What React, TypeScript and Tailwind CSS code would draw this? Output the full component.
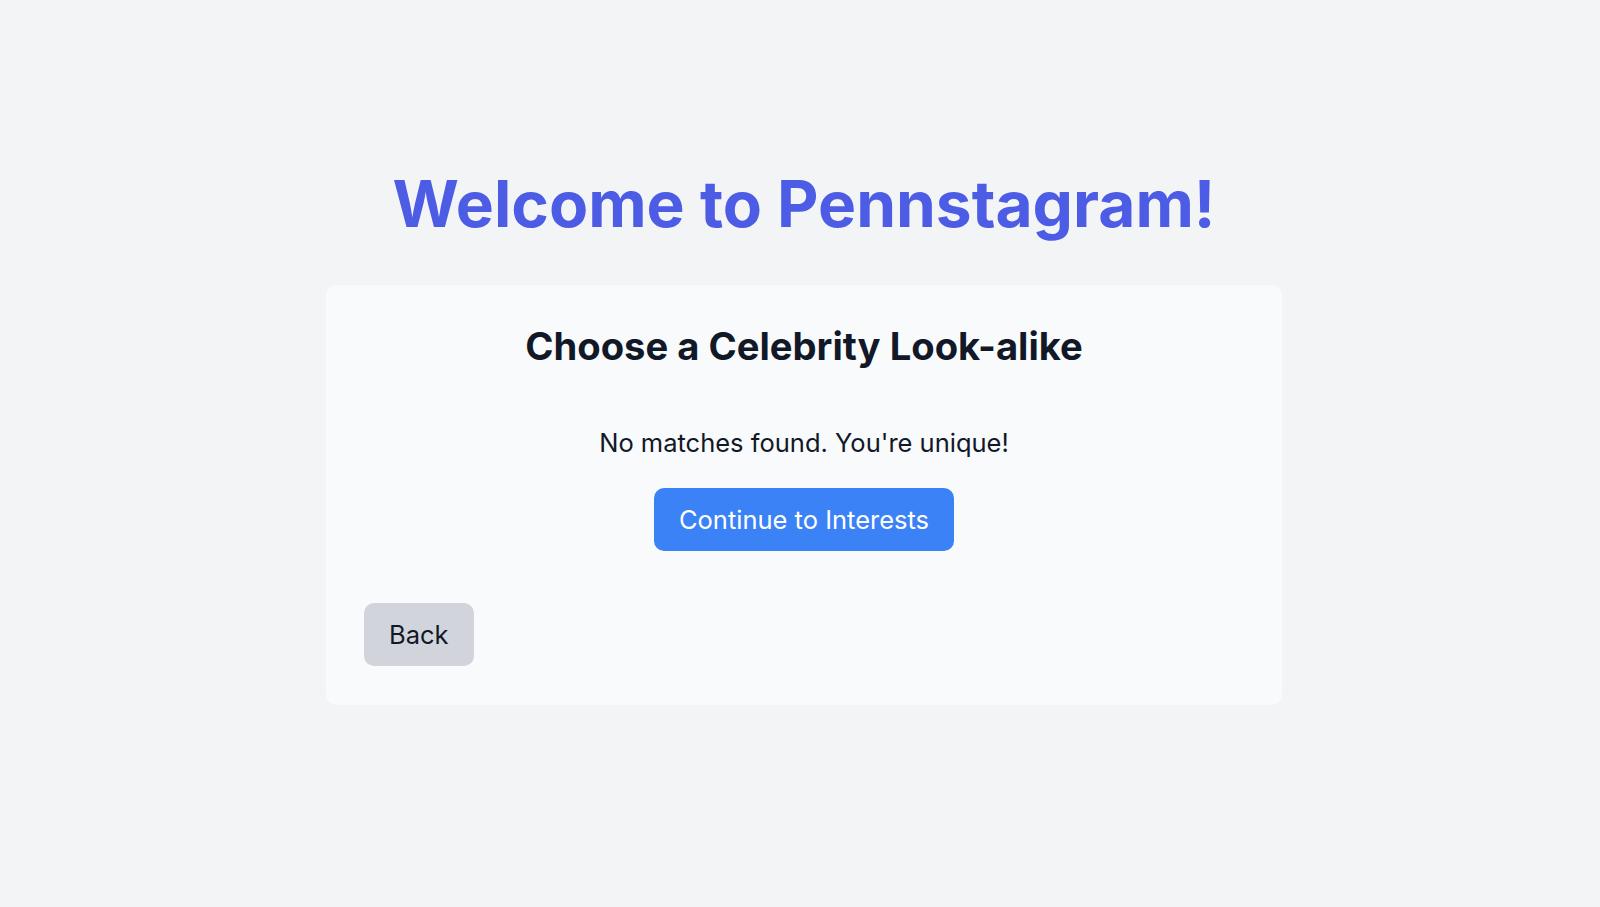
import React from 'react';

function CelebrityStep() {
  return (
    <div className="w-[956px] mt-[49px] rounded-[10px] bg-[#f9fafb] px-[38px] pt-[38px] pb-[39px]">
      <h2 className="text-center text-[38.2px] leading-[47px] font-bold text-[#111827]">
        Choose a Celebrity Look-alike
      </h2>

      <p className="mt-[55px] text-center text-[25.5px] leading-[35px] text-[#111827]">
        No matches found. You're unique!
      </p>

      <div className="mt-[28px] flex justify-center">
        <button className="rounded-[10px] bg-[#3b82f6] px-[25px] py-[14px] text-[25.5px] leading-[35px] text-white">
          Continue to Interests
        </button>
      </div>

      {/* Navigation */}
      <div className="mt-[52px] flex">
        <button className="rounded-[10px] bg-[#d1d5db] px-[25px] py-[14px] text-[25.5px] leading-[35px] text-[#111827]">
          Back
        </button>
      </div>
    </div>
  );
}

export default function App() {
  return (
    <div className="min-h-screen bg-[#f3f4f6] font-['Inter',sans-serif] flex flex-col items-center pt-[172px] pl-2">
      <h1 className="text-[64px] leading-[64px] font-bold text-[#4c5ce4]">
        Welcome to Pennstagram!
      </h1>
      <CelebrityStep />
    </div>
  );
}
